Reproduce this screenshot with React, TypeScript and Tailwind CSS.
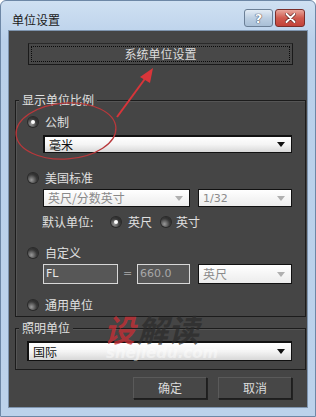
import React from "react";

const CJK = "font-['Noto_Sans_CJK_SC','Noto_Sans',sans-serif]";

function Radio({ on }: { on?: boolean }) {
  return (
    <span className="relative flex h-[10px] w-[10px] shrink-0 items-center justify-center rounded-full bg-[radial-gradient(circle_at_35%_70%,#9a9a9a,#3a3a3a_55%,#1a1a1a)] shadow-[0_0_0_1px_#2a2a2a]">
      {on && <span className="h-[4px] w-[4px] rounded-full bg-white" />}
    </span>
  );
}

function Arrow({ light }: { light?: boolean }) {
  return (
    <svg width="8" height="5" viewBox="0 0 8 5" className="shrink-0">
      <polygon points="0,0 8,0 4,5" fill={light ? "#b0b0b0" : "#111"} />
    </svg>
  );
}

function Select({ text, w, h, disabled, mono }: { text: string; w: string; h: string; disabled?: boolean; mono?: boolean }) {
  return (
    <div
      className={`flex ${w} ${h} items-center justify-between border border-[#111] pl-[4px] pr-[6px] ${
        disabled
          ? "bg-[linear-gradient(#ffffff,#ececec)] text-[#8a8a8a]"
          : "bg-[linear-gradient(#ffffff,#f4f4f4_50%,#d8d8d8)] text-[#111] border-t-2 border-l-2"
      } ${mono ? "font-['DejaVu_Sans',sans-serif] text-[11px]" : "text-[12px]"}`}
    >
      <span className="leading-none">{text}</span>
      <Arrow light={disabled} />
    </div>
  );
}

function Group({ label, className, children }: { label: string; className?: string; children: React.ReactNode }) {
  return (
    <div className={`relative ml-[6px] w-[291px] border border-[#1c1c1c] shadow-[inset_1px_1px_0_#555] ${className ?? ""}`}>
      <span className="absolute -top-[9px] left-[3px] bg-[#454545] px-[3px] text-[12px] leading-[16px] text-[#e0e0e0]">{label}</span>
      {children}
    </div>
  );
}

function Row({ on, label, className }: { on?: boolean; label: string; className?: string }) {
  return (
    <div className={`flex h-[16px] items-center gap-[7px] pl-[12px] ${className ?? ""}`}>
      <Radio on={on} />
      <span className="text-[12px] leading-none text-[#e0e0e0]">{label}</span>
    </div>
  );
}

function Btn({ label }: { label: string }) {
  return (
    <div className="flex h-[22px] w-[74px] items-center justify-center border border-[#1e1e1e] border-t-[#5a5a5a] border-l-[#5a5a5a] bg-[#474747] text-[12px] text-[#dcdcdc] shadow-[1px_1px_0_#222]">
      {label}
    </div>
  );
}

export default function App() {
  return (
    <div className={`relative h-[417px] w-[316px] overflow-hidden rounded-t-[6px] border border-[#6d87a6] bg-[linear-gradient(#cfe0f2,#b9d0ea_40px,#bcd2eb)] ${CJK}`}>
      {/* title bar */}
      <div className="flex h-[29px] items-start">
        <span className="ml-[11px] mt-[11px] text-[12px] leading-[16px] text-[#1a1a1a]">单位设置</span>
        <div className="ml-auto mr-[10px] mt-[8px] flex gap-[2px]">
          <div className="flex h-[18px] w-[29px] items-center justify-center rounded-[3px] border border-[#6b7f96] bg-[linear-gradient(#e3ecf5,#bdcfe2_50%,#a9bfd6)]">
            <span className="font-['DejaVu_Sans',sans-serif] text-[13px] font-bold leading-none text-white [text-shadow:0_0_1px_#334,0_0_1px_#334]">?</span>
          </div>
          <div className="flex h-[18px] w-[30px] items-center justify-center rounded-[3px] border border-[#7a2e2a] bg-[linear-gradient(#e8a69c,#d05a4e_50%,#c2433a)]">
            <svg width="11" height="10" viewBox="0 0 11 10">
              <path d="M1.5 1 L9.5 9 M9.5 1 L1.5 9" stroke="#5a1c18" strokeWidth="3.2" strokeLinecap="round" />
              <path d="M1.5 1 L9.5 9 M9.5 1 L1.5 9" stroke="#fff" strokeWidth="2" strokeLinecap="round" />
            </svg>
          </div>
        </div>
      </div>

      {/* client area */}
      <div className="ml-[7px] flex h-[378px] w-[300px] flex-col border border-[#7e94ae] bg-[#454545]">
        <div className="ml-[19px] mt-[12px] flex h-[22px] w-[265px] items-center border border-[#1a1a1a] border-t-[#2a2a2a] bg-[#484848] p-[2px]">
          <div className="flex h-full w-full items-center justify-center border border-dotted border-[#0a0a0a] text-[12px] text-[#dcdcdc]">
            系统单位设置
          </div>
        </div>

        <Group label="显示单位比例" className="mt-[35px] pb-[3px]">
          <Row on label="公制" className="mt-[13px]" />
          <div className="ml-[27px] mt-[5px]">
            <Select text="毫米" w="w-[249px]" h="h-[18px]" />
          </div>

          <Row label="美国标准" className="mt-[17px]" />
          <div className="ml-[27px] mt-[3px] flex gap-[8px]">
            <Select text="英尺/分数英寸" w="w-[147px]" h="h-[18px]" disabled />
            <Select text="1/32" w="w-[94px]" h="h-[18px]" disabled mono />
          </div>

          <div className="ml-[26px] mt-[7px] flex h-[16px] items-center text-[12px] leading-none text-[#e0e0e0]">
            <span className="w-[69px]">默认单位:</span>
            <Radio on />
            <span className="ml-[7px] w-[24px]">英尺</span>
            <span className="ml-[9px]"><Radio /></span>
            <span className="ml-[5px]">英寸</span>
          </div>

          <Row label="自定义" className="mt-[15px]" />
          <div className="ml-[27px] mt-[3px] flex items-center">
            <div className="flex h-[20px] w-[75px] items-center border border-[#d8d8d8] bg-[#575757] pl-[2px] font-['DejaVu_Sans',sans-serif] text-[11px] text-[#e8e8e8]">FL</div>
            <span className="w-[19px] text-center font-['DejaVu_Sans',sans-serif] text-[11px] text-[#9a9a9a]">=</span>
            <div className="flex h-[20px] w-[53px] items-center border border-[#d8d8d8] bg-[#575757] pl-[2px] font-['DejaVu_Sans',sans-serif] text-[11px] text-[#a8a8a8]">660.0</div>
            <div className="ml-[8px]">
              <Select text="英尺" w="w-[94px]" h="h-[20px]" disabled />
            </div>
          </div>

          <Row label="通用单位" className="mt-[13px]" />
        </Group>

        <Group label="照明单位" className="mt-[11px] pb-[8px]">
          <div className="ml-[11px] mt-[12px]">
            <Select text="国际" w="w-[265px]" h="h-[20px]" />
          </div>
        </Group>

        <div className="mr-[15px] mt-[7px] flex justify-end gap-[11px]">
          <Btn label="确定" />
          <Btn label="取消" />
        </div>
      </div>

      {/* watermark */}
      <div className="pointer-events-none absolute left-[103px] top-[312px] flex flex-col items-start">
        <div className="flex items-center text-[31px] font-bold italic leading-[32px]">
          <span className="text-[#c62f35]/80">设</span>
          <span className="ml-[2px] text-[#2a2a2a]/70">解读</span>
        </div>
        <span className="ml-[2px] font-['DejaVu_Sans',sans-serif] text-[15px] font-bold italic leading-[16px] text-white/45">shejiedu.com</span>
      </div>

      {/* red annotation */}
      <svg className="pointer-events-none absolute left-0 top-0" width="316" height="417" viewBox="0 0 316 417">
        <ellipse cx="65" cy="130" rx="50" ry="28" fill="none" stroke="#b8383b" strokeWidth="1.3" transform="rotate(-4 65 130)" />
        <line x1="116" y1="116" x2="146" y2="75" stroke="#d8353a" strokeWidth="2" />
        <polygon points="152,67 139,76 149,82" fill="#d8353a" />
      </svg>
    </div>
  );
}
